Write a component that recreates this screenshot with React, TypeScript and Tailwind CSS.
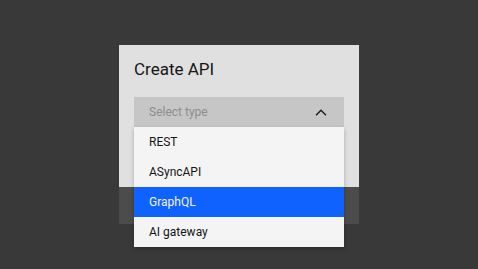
import React from 'react'

const types = ['REST', 'ASyncAPI', 'GraphQL', 'AI gateway']

function ChevronUp() {
  return (
    <svg width="12" height="7" viewBox="0 0 12 7" fill="none">
      <path d="M1 6.2 L6 1.2 L11 6.2" stroke="#161616" strokeWidth="1.3" />
    </svg>
  )
}

export default function App() {
  const selected = 'GraphQL'

  return (
    <div className="w-[478px] h-[269px] bg-[#393939] pt-[45px] pl-[119px] font-['Roboto',sans-serif] overflow-hidden">
      <div className="w-[240px] flex flex-col">
        <div className="bg-[#e0e0e0] h-[142px] px-[15px] pt-[13px]">
          <h2 className="text-[17px] leading-[22px] text-[#161616]">Create API</h2>
          <div className="relative mt-[17px]">
            <div className="h-[30px] bg-[#c6c6c6] flex items-center justify-between pl-[15px] pr-[17px]">
              <span className="text-[12px] text-[#8d8d8d]">Select type</span>
              <ChevronUp />
            </div>
            <ul className="absolute top-full left-0 w-full z-10 shadow-[0_2px_4px_rgba(0,0,0,0.25)]">
              {types.map((t) => (
                <li
                  key={t}
                  className={
                    t === selected
                      ? 'h-[30px] flex items-center pl-[15px] text-[12px] bg-[#0f62fe] text-[#f4f4f4]'
                      : 'h-[30px] flex items-center pl-[15px] text-[12px] bg-[#f4f4f4] text-[#161616]'
                  }
                >
                  {t}
                </li>
              ))}
            </ul>
          </div>
        </div>
        <div className="h-[37px] bg-[#4c4c4c]" />
      </div>
    </div>
  )
}
